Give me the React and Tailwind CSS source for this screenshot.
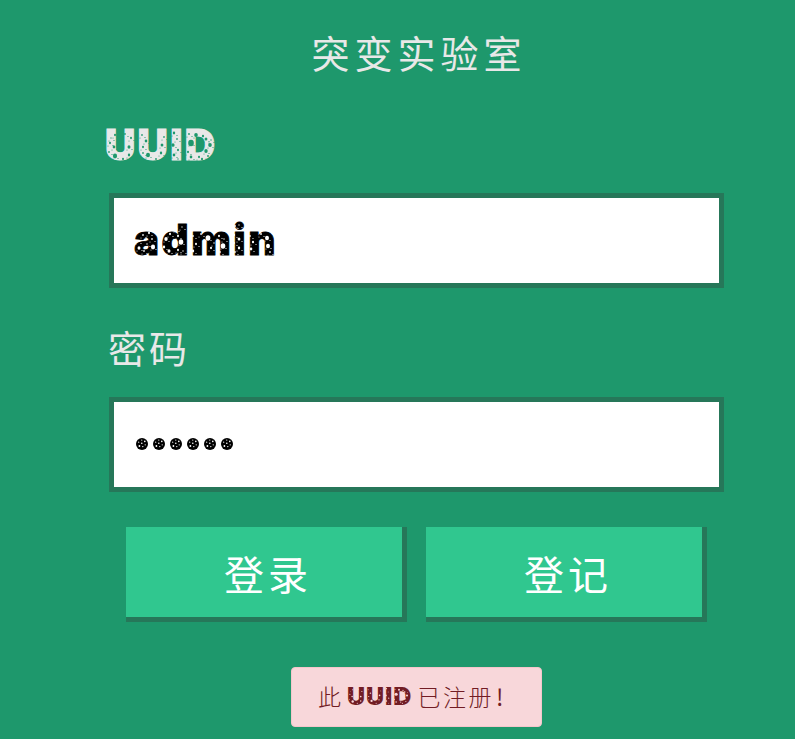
const HOLES = {
  label: [[10,5,1],[20,4,.8],[5,13,1],[9,17,1.3],[4,22,.8],[10,26,2.1],[18,29,1],[24,17,1.5],[26,8,1],[24,25,1.2],[6,8,.6],[37,5,.8],[41,11,1.3],[38,17,1],[43,25,2],[51,29,.9],[57,15,1.4],[59,7,.8],[56,23,1.2],[38,23,.8],[69,3,1.2],[72,9,.8],[68,15,1.6],[73,20,1],[69,25,1.3],[73,29,.7],[84,4,.9],[91,5,1.8],[98,6,1.1],[86,13,2.8],[83,22,1],[86,27,1.3],[94,27,1],[101,9,1.4],[105,15,1.8],[101,21,1.7],[103,26,.9],[97,29,1],[106,10,.7]],
  input: [[4,18,1],[9,12,.8],[15,10,1],[5,25,1.5],[10,28,.8],[19,24,2.1],[18,16,.8],[13,21,.7],[32,16,1.7],[36,11,1],[30,24,1.2],[35,28,1.5],[42,6,1.3],[44,13,1],[47,19,2.3],[44,27,1],[48,4,.6],[49,28,.7],[59,13,.8],[62,21,1],[59,28,1.2],[67,11,.8],[74,15,2.4],[77,25,1],[80,20,.7],[85,13,1],[89,23,2.3],[86,29,.8],[90,16,.7],[101,3,.9],[105,2,.6],[100,12,1],[105,16,1.4],[100,20,.8],[105,25,1.2],[101,29,.8],[116,13,.8],[119,19,1.1],[117,26,1.3],[127,11,.9],[133,15,2],[134,23,2],[136,29,.8]],
};

function Specks({ kind, width, className }) {
  return (
    <svg className={`absolute ${className}`} width={width} height="34" fill="currentColor" aria-hidden="true">
      {HOLES[kind].map(([x, y, r], i) => (
        <g key={i}>
          <ellipse cx={x} cy={y} rx={r} ry={r * 1.15} />
          <circle cx={x + 3} cy={y + 2.5} r=".6" />
          <circle cx={x - 2} cy={y + 3} r=".5" />
        </g>
      ))}
    </svg>
  );
}

function Dot() {
  return (
    <svg width="12" height="12" viewBox="0 0 12 12" aria-hidden="true">
      <circle cx="6" cy="6" r="6" fill="#000" />
      <g fill="#fff">
        <circle cx="5.8" cy="2.1" r=".6" />
        <circle cx="8.8" cy="3.4" r=".8" />
        <circle cx="2.7" cy="4.2" r=".6" />
        <circle cx="5.8" cy="5.2" r=".8" />
        <circle cx="9.2" cy="6.8" r=".6" />
        <circle cx="3.4" cy="8" r=".9" />
        <circle cx="6.8" cy="8.6" r=".7" />
      </g>
    </svg>
  );
}

function Button({ children }) {
  return (
    <button className="h-[95px] w-[281px] border-r-[5px] border-b-[5px] border-[#267759] bg-[#30c78f] pt-0.5 pl-2 text-[40px] leading-none font-normal tracking-[4px] text-white">
      {children}
    </button>
  );
}

export default function App() {
  return (
    <main className="h-[739px] w-full overflow-hidden bg-[#1e986c] pt-[30px] pl-[109px] font-['Noto_Sans_CJK_SC',sans-serif] font-normal">
      <div className="flex w-[615px] flex-col">
        <h1 className="h-11 pl-[5px] text-center text-[38px] leading-[44px] tracking-[5px] text-[#e8e8e8]">突变实验室</h1>

        <label className="relative -ml-1 mt-[49px] h-11 w-fit font-['Inter',sans-serif] text-[42px] leading-[44px] font-black tracking-[2.3px] whitespace-nowrap text-[#e8e8e8] [-webkit-text-stroke:1px_#e8e8e8]">
          UUID
          <Specks kind="label" width={112} className="top-[7px] left-0 text-[#1e986c]" />
        </label>
        <div className="mt-[26px] flex h-[95px] items-center border-[5px] border-[#267759] bg-white pl-5">
          <span className="relative h-[45px] font-['Inter',sans-serif] text-[42px] leading-[44px] font-black tracking-[2.5px] text-black [-webkit-text-stroke:0.8px_black]">
            admin
            <Specks kind="input" width={144} className="top-[5px] left-0 text-white" />
          </span>
        </div>

        <label className="mt-[37px] -ml-px h-11 text-[38px] leading-[44px] tracking-[3px] text-[#e8e8e8]">密码</label>
        <div className="mt-7 flex h-[95px] items-center gap-[5px] border-[5px] border-[#267759] bg-white pb-0.5 pl-[22px]">
          <Dot /><Dot /><Dot /><Dot /><Dot /><Dot />
        </div>

        <div className="mt-[35px] flex gap-[19px] pl-[17px]">
          <Button>登录</Button>
          <Button>登记</Button>
        </div>

        <div className="mt-[45px] ml-[182px] flex h-[60px] w-[251px] items-center rounded-[4px] border border-[#f5c6cb] bg-[#f8d7da] pb-0.5 pl-[26px] text-[23px] leading-none font-light text-[#721c24]">
          <span>此</span>
          <span className="relative mr-[5px] ml-1.5 font-['Inter',sans-serif] text-[25px] font-black tracking-[1px]">
            UUID
            <svg className="absolute top-[3px] left-0 text-[#f8d7da]" width="64" height="19" viewBox="0 0 112 34" preserveAspectRatio="none" fill="currentColor" aria-hidden="true">
              {HOLES.label.map(([x, y, r], i) => <circle key={i} cx={x} cy={y} r={r} />)}
            </svg>
          </span>
          <span className="tracking-[2.5px]">已注册<span className="ml-0.5 font-normal">!</span></span>
        </div>
      </div>
    </main>
  );
}
